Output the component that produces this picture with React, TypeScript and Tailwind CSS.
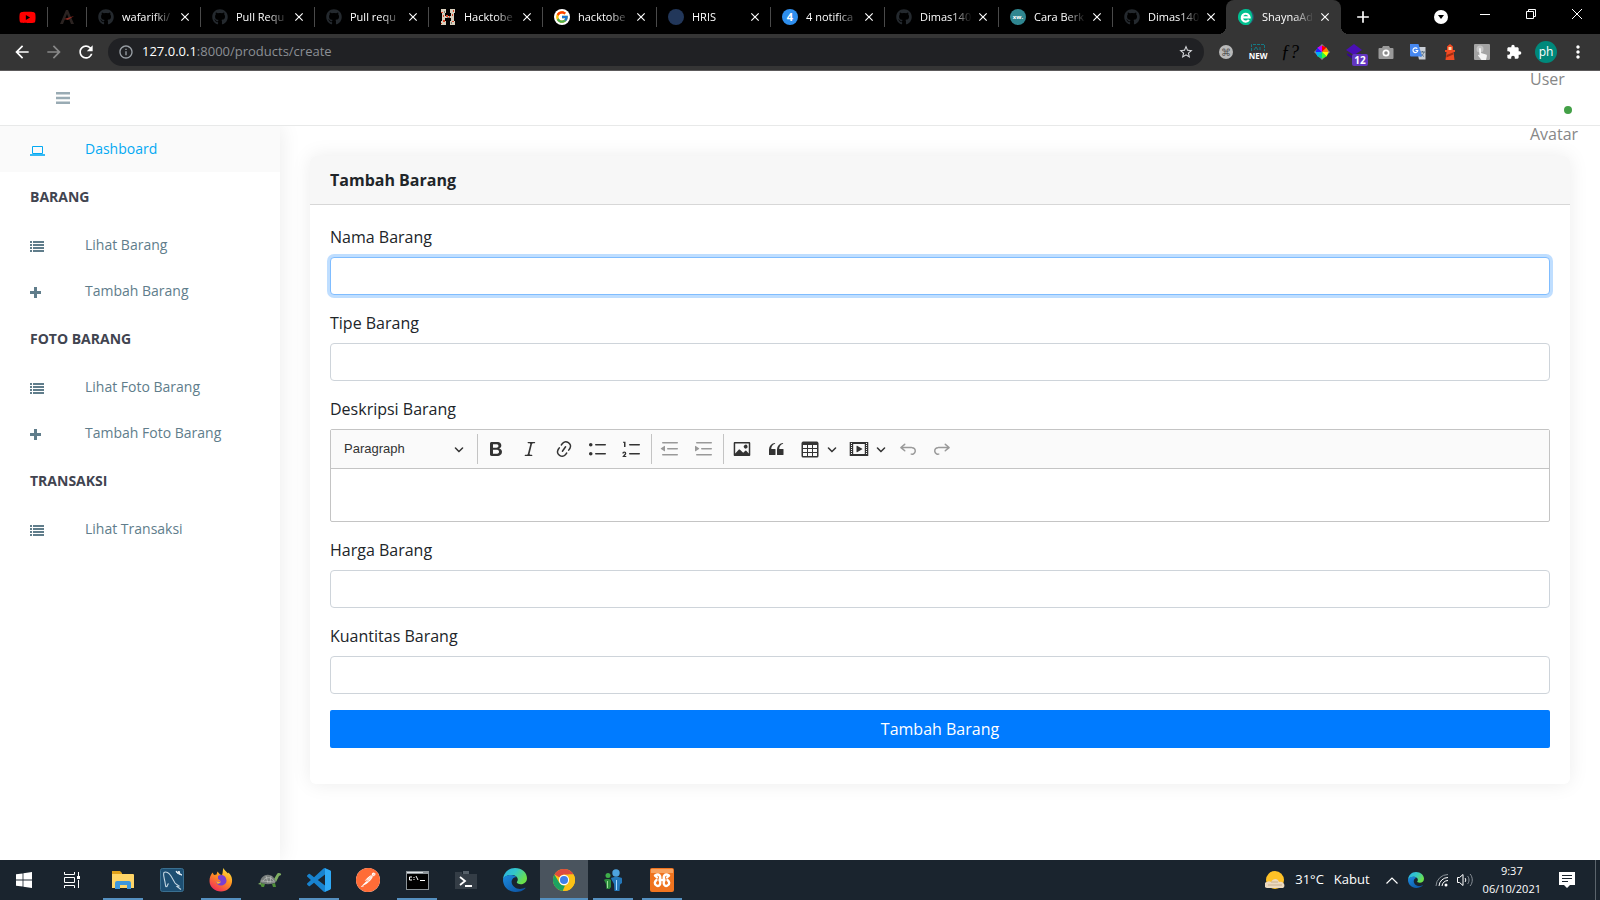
import type { ReactNode } from "react";
import { FaGithub, FaYoutube } from "react-icons/fa";
import { FcGoogle } from "react-icons/fc";
import {
  MdAdd,
  MdArrowBack,
  MdArrowForward,
  MdClose,
  MdExtension,
  MdInfoOutline,
  MdMoreVert,
  MdRefresh,
  MdStarBorder,
} from "react-icons/md";
import { SiPostman } from "react-icons/si";

/* ---------- Browser tabs ---------- */

const github = <FaGithub className="size-4 text-[#24292e]" />;

const HacktoberIcon = () => (
  <svg viewBox="0 0 16 16" className="size-4">
    <path d="M1 0h5v4H5v3h6V4h-1V0h5v4h-1v8h1v4h-5v-4h1V9H5v3h1v4H1v-4h1V4H1z" fill="#d8cfbd" />
    <path d="M1 3h2v1H1zM6 6h2v2H6zM9 7h1v2H9zM13 1h1v2h-1zM3 11h2v2H3zM12 12h2v1h-2zM3 6h1v2H3zM12 5h1v2h-1zM1 14h1v1H1z" fill="#d9482b" />
    <path d="M4 2h1v2H4zM11 13h1v2h-1zM7 8h2v1H7z" fill="#7d8378" />
  </svg>
);

const ShaynaIcon = () => (
  <svg viewBox="0 0 16 16" className="size-4 shrink-0">
    <circle cx="8" cy="8" r="8" fill="#2f4f6a" />
    <path d="M11 .600A8 8 0 1 0 11 15.400 9.500 9.500 0 0 0 11 .600z" fill="#00c08f" />
    <path d="M4.200 8.400h7.400A3.900 3.900 0 1 0 10.900 10.900" fill="none" stroke="#fff" strokeWidth="2.200" />
  </svg>
);

type Tab = { title: string; icon: ReactNode };

const tabs: Tab[] = [
  { title: "wafarifki/", icon: github },
  { title: "Pull Requ", icon: github },
  { title: "Pull requ", icon: github },
  { title: "Hacktobe", icon: <HacktoberIcon /> },
  {
    title: "hacktobe",
    icon: (
      <span className="flex size-4 items-center justify-center rounded-full bg-white">
        <FcGoogle className="size-3.5" />
      </span>
    ),
  },
  { title: "HRIS", icon: <span className="size-4 rounded-full bg-[#22375a]" /> },
  {
    title: "4 notifica",
    icon: (
      <span className="flex size-4 items-center justify-center rounded-full bg-[#2e8eed] text-[11px] font-bold text-white">
        4
      </span>
    ),
  },
  { title: "Dimas140", icon: github },
  {
    title: "Cara Berk",
    icon: (
      <span className="flex size-4 items-center justify-center rounded-full bg-[#2f8690] text-[6px] font-bold text-white">
        xw.
      </span>
    ),
  },
  { title: "Dimas140", icon: github },
];

const tabTitle =
  "w-[52px] overflow-hidden whitespace-nowrap text-[11px] text-white [mask-image:linear-gradient(to_right,#000_60%,transparent)]";

function TabStrip() {
  return (
    <div className="flex h-[34px] items-center bg-black pl-3">
      <button aria-label="YouTube" className="flex w-[35px] justify-center pr-1">
        <FaYoutube className="size-[17px] text-[#f00]" />
      </button>
      <button aria-label="Pinned tab" className="flex h-5 w-[39px] items-center justify-center border-l border-[#4a4a4a]">
        <svg viewBox="0 0 16 16" className="size-4">
          <path d="M1 15 7 1h2l6 14h-3L8 5 4 15z" fill="#2b2321" />
          <path d="m5 10 10-3-6 4z" fill="#8d2b22" />
        </svg>
      </button>
      {tabs.map((tab, i) => (
        <div key={i} className="flex h-5 w-[114px] items-center border-l border-[#4a4a4a] pl-[11px]">
          <span className="flex shrink-0">{tab.icon}</span>
          <span className={`ml-2 ${tabTitle}`}>{tab.title}</span>
          <button aria-label="Close tab" className="ml-1">
            <MdClose className="size-3.5 text-white" />
          </button>
        </div>
      ))}
      <div className="relative flex h-full w-[115px] items-center rounded-t-lg bg-[#353535] pl-3">
        <span className="absolute bottom-0 -left-2 size-2 bg-[radial-gradient(circle_at_0_0,transparent_8px,#353535_8px)]" />
        <span className="absolute -right-2 bottom-0 size-2 bg-[radial-gradient(circle_at_100%_0,transparent_8px,#353535_8px)]" />
        <ShaynaIcon />
        <span className={`ml-2 ${tabTitle}`}>ShaynaAd</span>
        <button aria-label="Close tab" className="ml-1">
          <MdClose className="size-3.5 text-white" />
        </button>
      </div>
      <button aria-label="New tab" className="ml-3">
        <MdAdd className="size-5 text-white" />
      </button>
      <div className="ml-auto flex h-full items-center text-white">
        <button aria-label="Search tabs" className="flex size-3.5 items-center justify-center rounded-full bg-white">
          <svg viewBox="0 0 8 6" className="h-1.5 w-2">
            <path d="M1 1h6L4 5z" fill="#000" />
          </svg>
        </button>
        <div className="ml-3.5 flex pb-1.5">
          <button aria-label="Minimize" className="flex w-[46px] justify-center">
            <svg viewBox="0 0 12 12" className="size-3" stroke="#fff" fill="none">
              <path d="M1 6.500h10" />
            </svg>
          </button>
          <button aria-label="Restore" className="flex w-[46px] justify-center">
            <svg viewBox="0 0 12 12" className="size-3" stroke="#fff" fill="none">
              <path d="M1.500 3.500h7v7h-7zM3.500 3.500v-2h7v7h-2" />
            </svg>
          </button>
          <button aria-label="Close" className="flex w-[46px] justify-center">
            <svg viewBox="0 0 12 12" className="size-3" stroke="#fff" fill="none">
              <path d="m1 1 10 10M11 1 1 11" />
            </svg>
          </button>
        </div>
      </div>
    </div>
  );
}

/* ---------- Browser toolbar ---------- */

const wheel = ["#f00", "#ff8a00", "#ff0", "#3f3", "#0c9", "#0af", "#22f", "#c0f"];

const extensions: { name: string; icon: ReactNode }[] = [
  {
    name: "Shortcuts",
    icon: (
      <span className="flex size-3.5 items-center justify-center rounded-full bg-[#b9b9b9] text-[10px] text-[#555]">⌘</span>
    ),
  },
  {
    name: "Screenshot",
    icon: (
      <span className="flex h-4 w-4 flex-col items-center">
        <svg viewBox="0 0 14 7" className="h-[7px] w-3.5" fill="none" stroke="#147a86">
          <path d="M.5 7V.5h13V7" strokeDasharray="3 1" />
          <path d="m3 6 2-3 2 3M9 3v3" />
        </svg>
        <span className="text-[8px] leading-[9px] font-bold text-white">NEW</span>
      </span>
    ),
  },
  {
    name: "What font",
    icon: <span className="font-['Liberation_Serif',serif] text-lg leading-4 text-black italic">ƒ?</span>,
  },
  {
    name: "Colour picker",
    icon: (
      <svg viewBox="-8 -8 16 16" className="size-4">
        <path d="M0-8 8 0 0 8-8 0z" fill="#8a8a8a" />
        {wheel.map((c, i) => (
          <path key={c} d="M0 0 0-6.500 4.600-4.600z" fill={c} transform={`rotate(${i * 45})`} />
        ))}
      </svg>
    ),
  },
  {
    name: "Stack",
    icon: (
      <span className="relative flex size-4">
        <svg viewBox="0 0 16 16" className="size-4">
          <path d="M8 0 16 6 8 11 0 6z" fill="#4a0fb5" />
          <path d="m1 9 7 4 7-4v2l-7 5-7-5z" fill="#35098a" />
        </svg>
        <span className="absolute top-2.5 left-1.5 flex h-3 w-4 items-center justify-center rounded-xs bg-[#6236c0] text-[10px] font-bold text-white">
          12
        </span>
      </span>
    ),
  },
  {
    name: "Camera",
    icon: (
      <svg viewBox="0 0 16 16" className="size-4">
        <path d="M5 2h6l1 2h2.500a1 1 0 0 1 1 1v9a1 1 0 0 1-1 1h-13a1 1 0 0 1-1-1V5a1 1 0 0 1 1-1H4z" fill="#9a9a9a" />
        <circle cx="8" cy="9" r="3.500" fill="#fff" />
        <circle cx="8" cy="9" r="1.800" fill="#888" />
      </svg>
    ),
  },
  {
    name: "Translate",
    icon: (
      <svg viewBox="0 0 16 16" className="size-4">
        <path d="M6 3h9.500v12.500H9z" fill="#c9ced6" />
        <path d="M10 8h5M12.500 7v1M14 8c-.5 2-2 3.500-3.500 4.500M11 9.500c1 1.500 2 2.500 3 3" stroke="#5a7285" fill="none" />
        <path d="M0 0h8.500L12 12.500H1a1 1 0 0 1-1-1z" fill="#4688f1" />
        <path d="M7.300 4.700A2.400 2.400 0 1 0 7.800 6.500H5.500" stroke="#fff" strokeWidth="1.200" fill="none" />
      </svg>
    ),
  },
  {
    name: "Lighthouse",
    icon: (
      <svg viewBox="0 0 16 16" className="size-4">
        <path d="m8 0 3 2.500V6h2v2h-1.500l1 8h-9l1-8H3V6h2V2.500z" fill="#f04b23" />
        <path d="M6.500 3h3v3h-3z" fill="#ffd9a8" />
        <path d="m4.500 11 6.500-2.500.3 2-7 3z" fill="#a12c12" />
      </svg>
    ),
  },
  {
    name: "Touch",
    icon: (
      <svg viewBox="0 0 16 16" className="size-4">
        <rect width="16" height="16" rx="1" fill="#a3a3a3" />
        <circle cx="6" cy="5" r="3.500" fill="#c4c4c4" />
        <path d="M5 5a1 1 0 0 1 2 0v4l5 1.500c1 .3 1 1 .8 2L12 16H7.500L4 11.500c0-1 1-1 1.500 0z" fill="#f4f4f4" />
      </svg>
    ),
  },
  { name: "Extensions", icon: <MdExtension className="size-4 text-white" /> },
];

function Toolbar() {
  return (
    <div className="flex h-[37px] items-center border-b border-[#5c5a5b] bg-[#353535] pr-1.5 pl-3">
      <div className="flex items-center gap-3">
        <button aria-label="Back">
          <MdArrowBack className="size-5 text-white" />
        </button>
        <button aria-label="Forward">
          <MdArrowForward className="size-5 text-[#888]" />
        </button>
        <button aria-label="Reload">
          <MdRefresh className="size-5 text-white" />
        </button>
      </div>
      <div className="ml-3 flex h-7 flex-1 items-center rounded-full bg-[#202124] px-2.5">
        <MdInfoOutline className="size-4 text-[#9aa0a6]" />
        <p className="ml-2 flex-1 text-[13px] text-[#8b8f94]">
          <span className="text-white">127.0.0.1</span>:8000/products/create
        </p>
        <button aria-label="Bookmark">
          <MdStarBorder className="size-4 text-[#d5d7da]" />
        </button>
      </div>
      <div className="ml-1.5 flex">
        {extensions.map((e) => (
          <button key={e.name} aria-label={e.name} className="flex w-8 items-center justify-center">
            {e.icon}
          </button>
        ))}
        <button aria-label="Profile" className="flex w-8 items-center justify-center">
          <span className="flex size-[22px] items-center justify-center rounded-full bg-[#00897b] pb-px text-xs text-white">ph</span>
        </button>
        <button aria-label="Menu" className="flex w-8 items-center justify-center">
          <MdMoreVert className="size-5 text-white" />
        </button>
      </div>
    </div>
  );
}

/* ---------- Admin sidebar ---------- */

const LaptopIcon = () => (
  <svg viewBox="0 0 15 11" className="h-[11px] w-[15px]" fill="none" stroke="currentColor">
    <path d="M2.500 8.500v-7h10v7z" />
    <path d="M0 10h15" strokeWidth="1.600" />
  </svg>
);

const ListIcon = () => (
  <svg viewBox="0 0 14 11" className="h-[11px] w-3.5" fill="currentColor">
    <path d="M0 0h2v2H0zM3 0h11v2H3zM0 3h2v2H0zM3 3h11v2H3zM0 6h2v2H0zM3 6h11v2H3zM0 9h2v2H0zM3 9h11v2H3z" />
  </svg>
);

const PlusIcon = () => (
  <svg viewBox="0 0 11 11" className="size-[11px]" fill="currentColor">
    <path d="M4 0h3v4h4v3H7v4H4V7H0V4h4z" />
  </svg>
);

function NavLink({ icon, label, active }: { icon: ReactNode; label: string; active?: boolean }) {
  return (
    <a
      href="#"
      className={`flex h-[46px] items-center pl-[30px] text-sm ${active ? "bg-[#fafafa] text-[#03a9f3]" : "text-[#607d8b]"}`}
    >
      <span className="flex w-[55px] pt-0.5">{icon}</span>
      {label}
    </a>
  );
}

const NavTitle = ({ children }: { children: string }) => (
  <h3 className="flex h-[50px] items-center pl-[30px] text-sm font-bold text-[#414450]">{children}</h3>
);

function Sidebar() {
  return (
    <aside className="w-[280px] shrink-0 bg-white shadow-[1px_0_20px_rgba(0,0,0,0.08)]">
      <nav>
        <NavLink icon={<LaptopIcon />} label="Dashboard" active />
        <NavTitle>BARANG</NavTitle>
        <NavLink icon={<ListIcon />} label="Lihat Barang" />
        <NavLink icon={<PlusIcon />} label="Tambah Barang" />
        <NavTitle>FOTO BARANG</NavTitle>
        <NavLink icon={<ListIcon />} label="Lihat Foto Barang" />
        <NavLink icon={<PlusIcon />} label="Tambah Foto Barang" />
        <NavTitle>TRANSAKSI</NavTitle>
        <NavLink icon={<ListIcon />} label="Lihat Transaksi" />
      </nav>
    </aside>
  );
}

/* ---------- Rich text editor ---------- */

const paths = {
  bold: "M10.187 17H5.773c-.637 0-1.092-.138-1.364-.415-.273-.277-.409-.718-.409-1.323V4.738c0-.617.14-1.062.419-1.332.279-.27.73-.406 1.354-.406h4.68c.69 0 1.288.041 1.793.124.506.083.96.242 1.36.478.341.197.644.447.906.75a3.262 3.262 0 0 1 .808 2.162c0 1.401-.722 2.426-2.167 3.075C15.05 10.175 16 11.315 16 13.01a3.756 3.756 0 0 1-2.296 3.504 6.1 6.1 0 0 1-1.517.377c-.571.073-1.238.11-2 .11zm-.217-6.217H7v4.087h3.069c1.977 0 2.965-.69 2.965-2.072 0-.707-.256-1.22-.768-1.537-.512-.319-1.277-.478-2.296-.478zM7 5.13v3.619h2.606c.729 0 1.292-.067 1.69-.2a1.6 1.6 0 0 0 .91-.765c.165-.267.247-.566.247-.897 0-.707-.26-1.176-.778-1.409-.519-.232-1.31-.348-2.375-.348H7z",
  italic:
    "m9.586 14.633.021.004c-.036.335.095.655.393.962.082.083.173.15.274.201h1.474a.6.6 0 1 1 0 1.2H5.304a.6.6 0 0 1 0-1.2h1.15c.474-.07.809-.182 1.005-.334.157-.122.291-.32.404-.597l2.416-9.55a1.053 1.053 0 0 0-.281-.823 1.12 1.12 0 0 0-.442-.296H8.15a.6.6 0 0 1 0-1.2h6.443a.6.6 0 1 1 0 1.2h-1.195c-.376.056-.65.155-.823.296-.215.175-.423.439-.623.79l-2.366 9.347z",
  link: "m11.077 15 .991-1.416a.75.75 0 1 1 1.229.86l-1.148 1.64a.748.748 0 0 1-.217.206 5.251 5.251 0 0 1-8.503-5.955.741.741 0 0 1 .12-.274l1.147-1.639a.75.75 0 1 1 1.228.86L4.933 10.7l.006.003a3.75 3.75 0 0 0 6.132 4.294l.006.004zm5.494-5.335a.748.748 0 0 1-.12.274l-1.147 1.639a.75.75 0 1 1-1.228-.86l.86-1.23a3.75 3.75 0 0 0-6.144-4.301l-.86 1.229a.75.75 0 0 1-1.229-.86l1.148-1.64a.748.748 0 0 1 .217-.206 5.251 5.251 0 0 1 8.503 5.955zm-4.563-2.532a.75.75 0 0 1 .184 1.045l-3.155 4.505a.75.75 0 1 1-1.229-.86l3.155-4.506a.75.75 0 0 1 1.045-.184z",
  bulleted:
    "M7 5.75c0 .414.336.75.75.75h9.5a.75.75 0 1 0 0-1.5h-9.5a.75.75 0 0 0-.75.75zm-6 0C1 4.784 1.777 4 2.75 4c.966 0 1.75.777 1.75 1.75 0 .966-.777 1.75-1.75 1.75C1.784 7.5 1 6.723 1 5.75zm6 9c0 .414.336.75.75.75h9.5a.75.75 0 1 0 0-1.5h-9.5a.75.75 0 0 0-.75.75zm-6 0c0-.966.777-1.75 1.75-1.75.966 0 1.75.777 1.75 1.75 0 .966-.777 1.75-1.75 1.75-.966 0-1.75-.777-1.75-1.75z",
  numbered:
    "M7 5.75c0 .414.336.75.75.75h9.5a.75.75 0 1 0 0-1.5h-9.5a.75.75 0 0 0-.75.75zM3.5 3v5H2V3.7H1v-1h2.5V3zM.343 17.857l2.59-3.257H2.92a.6.6 0 1 0-1.04 0H.302a2 2 0 1 1 3.995 0h-.001c-.048.405-.16.734-.333.988-.175.254-.59.692-1.244 1.312H4.3v1h-4l.043-.043zM7 14.75a.75.75 0 0 1 .75-.75h9.5a.75.75 0 1 1 0 1.5h-9.5a.75.75 0 0 1-.75-.75z",
  outdent:
    "M2 3.75c0 .414.336.75.75.75h14.5a.75.75 0 1 0 0-1.5H2.75a.75.75 0 0 0-.75.75zm5 6c0 .414.336.75.75.75h9.5a.75.75 0 1 0 0-1.5h-9.5a.75.75 0 0 0-.75.75zM2.75 16.5h14.5a.75.75 0 1 0 0-1.5H2.75a.75.75 0 1 0 0 1.5zM5 7.275v4.617a.4.4 0 0 1-.618.334L.992 10.02a.4.4 0 0 1-.013-.661l3.39-2.408A.4.4 0 0 1 5 7.275z",
  indent:
    "M2 3.75c0 .414.336.75.75.75h14.5a.75.75 0 1 0 0-1.5H2.75a.75.75 0 0 0-.75.75zm5 6c0 .414.336.75.75.75h9.5a.75.75 0 1 0 0-1.5h-9.5a.75.75 0 0 0-.75.75zM2.75 16.5h14.5a.75.75 0 1 0 0-1.5H2.75a.75.75 0 1 0 0 1.5zM1.632 6.95 5.02 9.358a.4.4 0 0 1-.013.661l-3.39 2.207A.4.4 0 0 1 1 11.892V7.275a.4.4 0 0 1 .632-.326z",
  image:
    "M6.91 10.54c.26-.23.64-.21.88.03l3.36 3.14 2.23-2.06a.64.64 0 0 1 .87 0l2.52 2.97V4.5H3.2v10.12l3.71-4.08zm10.27-7.51c.6 0 1.09.47 1.09 1.05v11.84c0 .59-.49 1.06-1.09 1.06H2.79c-.6 0-1.09-.47-1.09-1.06V4.08c0-.58.49-1.05 1.1-1.05h14.38zm-5.22 5.56a1.96 1.96 0 1 1 3.4-1.96 1.96 1.96 0 0 1-3.4 1.96z",
  quote:
    "M3 10.423a6.5 6.5 0 0 1 6.056-6.408l.038.67C6.448 5.423 5.354 7.663 5.22 10H9c.552 0 .5.432.5.986v4.511c0 .554-.448.503-1 .503h-5c-.552 0-.5-.449-.5-1.003v-4.574zm8 0a6.5 6.5 0 0 1 6.056-6.408l.038.67c-2.646.739-3.74 2.979-3.873 5.315H17c.552 0 .5.432.5.986v4.511c0 .554-.448.503-1 .503h-5c-.552 0-.5-.449-.5-1.003v-4.574z",
  table:
    "M3 6v3h4V6H3zm0 4v3h4v-3H3zm0 4v3h4v-3H3zm5 3h4v-3H8v3zm5 0h4v-3h-4v3zm4-4v-3h-4v3h4zm0-4V6h-4v3h4zm1.5 8a1.5 1.5 0 0 1-1.5 1.5H3A1.5 1.5 0 0 1 1.5 17V4c.222-.863 1.068-1.5 2-1.5h13c.932 0 1.778.637 2 1.5v13zM12 13v-3H8v3h4zm0-4V6H8v3h4z",
  media:
    "M18.68 3.03c.6 0 .59-.03.59.55v12.84c0 .59.01.56-.59.56H1.29c-.6 0-.59.03-.59-.56V3.58c0-.58-.01-.55.6-.55h17.38zM15.77 15V5H4.2v10h11.57zM2 4v1h1V4H2zm0 2v1h1V6H2zm0 2v1h1V8H2zm0 2v1h1v-1H2zm0 2v1h1v-1H2zm0 2v1h1v-1H2zM17 4v1h1V4h-1zm0 2v1h1V6h-1zm0 2v1h1V8h-1zm0 2v1h1v-1h-1zm0 2v1h1v-1h-1zm0 2v1h1v-1h-1zM7.5 7.177a.4.4 0 0 1 .593-.351l5.133 2.824a.4.4 0 0 1 0 .7l-5.133 2.824a.4.4 0 0 1-.593-.35V7.176v.001z",
  undo: "m5.042 9.367 2.189 1.837a.75.75 0 0 1-.965 1.149l-3.788-3.18a.747.747 0 0 1-.21-.284.75.75 0 0 1 .17-.945L6.23 4.762a.75.75 0 1 1 .964 1.15L4.863 7.866h8.917A.75.75 0 0 1 14 7.9a4 4 0 1 1-1.477 7.718l.344-1.489a2.5 2.5 0 1 0 1.094-4.73l.008-.032H5.042z",
  redo: "m14.958 9.367-2.189 1.837a.75.75 0 0 0 .965 1.149l3.788-3.18a.747.747 0 0 0 .21-.284.75.75 0 0 0-.17-.945L13.77 4.762a.75.75 0 1 0-.964 1.15l2.331 1.955H6.22A.75.75 0 0 0 6 7.9a4 4 0 1 0 1.477 7.718l-.344-1.489A2.5 2.5 0 1 1 6.039 9.4l-.008-.032h8.927z",
};

function Arrow({ className = "" }: { className?: string }) {
  return (
    <svg viewBox="0 0 10 10" className={`size-2.5 shrink-0 ${className}`} fill="currentColor">
      <path d="M.941 4.523a.75.75 0 1 1 1.06-1.06l3.006 3.005 3.005-3.005a.75.75 0 1 1 1.06 1.06l-3.549 3.55a.75.75 0 0 1-1.168-.136L.941 4.523z" />
    </svg>
  );
}

function Tool({ icon, label, menu, disabled }: { icon: keyof typeof paths; label: string; menu?: boolean; disabled?: boolean }) {
  return (
    <button
      type="button"
      aria-label={label}
      disabled={disabled}
      className={`flex h-[30px] items-center gap-[7px] pl-[5px] text-[#333] disabled:text-[#999] ${menu ? "w-[46px]" : "w-[31px]"}`}
    >
      <svg viewBox="0 0 20 20" className="size-5 shrink-0" fill="currentColor">
        <path d={paths[icon]} />
      </svg>
      {menu && <Arrow />}
    </button>
  );
}

const Divider = () => <span className="h-[30px] w-px bg-[#c4c4c4]" />;

function Editor() {
  return (
    <div className="rounded-xs border border-[#c4c4c4] bg-white">
      <div className="flex h-[39px] items-center gap-[3px] border-b border-[#c4c4c4] bg-[#fafafa] pl-[5px]">
        <div className="grid w-[138px] items-center">
          <select
            aria-label="Heading"
            className="col-start-1 row-start-1 h-[30px] appearance-none bg-transparent pl-2 font-['Liberation_Sans',Arial,sans-serif] text-[13px] text-[#333]"
          >
            <option>Paragraph</option>
          </select>
          <Arrow className="pointer-events-none col-start-1 row-start-1 mr-2.5 justify-self-end text-[#333]" />
        </div>
        <Divider />
        <Tool icon="bold" label="Bold" />
        <Tool icon="italic" label="Italic" />
        <Tool icon="link" label="Link" />
        <Tool icon="bulleted" label="Bulleted List" />
        <Tool icon="numbered" label="Numbered List" />
        <Divider />
        <Tool icon="outdent" label="Decrease indent" disabled />
        <Tool icon="indent" label="Increase indent" disabled />
        <Divider />
        <Tool icon="image" label="Insert image" />
        <Tool icon="quote" label="Block quote" />
        <Tool icon="table" label="Insert table" menu />
        <Tool icon="media" label="Insert media" menu />
        <Tool icon="undo" label="Undo" disabled />
        <Tool icon="redo" label="Redo" disabled />
      </div>
      <textarea id="description" className="block h-[52px] w-full resize-none px-2.5 outline-none" />
    </div>
  );
}

/* ---------- Form ---------- */

function Field({ id, label, focused }: { id: string; label: string; focused?: boolean }) {
  return (
    <div className="mb-4">
      <label htmlFor={id} className="mb-2 block text-base">
        {label}
      </label>
      <input
        id={id}
        name={id}
        type="text"
        className={`block h-[38px] w-full rounded border bg-white px-3 outline-none ${
          focused ? "border-[#80bdff] shadow-[0_0_0_3px_rgba(0,123,255,0.25)]" : "border-[#ced4da]"
        }`}
      />
    </div>
  );
}

function ProductForm() {
  return (
    <section className="rounded-md bg-white shadow-[0_0_20px_rgba(0,0,0,0.08)]">
      <h1 className="rounded-t-md border-b border-[#d7d7d7] bg-[#f7f7f7] px-5 py-3 text-base font-bold">Tambah Barang</h1>
      <form className="p-5">
        <Field id="name" label="Nama Barang" focused />
        <Field id="type" label="Tipe Barang" />
        <div className="mb-4">
          <label htmlFor="description" className="mb-2 block text-base">
            Deskripsi Barang
          </label>
          <Editor />
        </div>
        <Field id="price" label="Harga Barang" />
        <Field id="quantity" label="Kuantitas Barang" />
        <button type="button" className="mb-4 block h-[38px] w-full rounded-xs bg-[#007bff] text-base text-white">
          Tambah Barang
        </button>
      </form>
    </section>
  );
}

function AdminPage() {
  return (
    <div className="flex flex-1 flex-col bg-white text-[#212529]">
      <header className="relative z-10 flex h-[55px] items-center border-b border-[#e8e9e9] bg-white pl-14">
        <button aria-label="Toggle menu">
          <svg viewBox="0 0 14 12" className="h-3 w-3.5" fill="#99abb4">
            <path d="M0 0h14v2.500H0zM0 4.800h14v2.400H0zM0 9.500h14V12H0z" />
          </svg>
        </button>
        <a href="#" className="absolute -top-[19px] right-[22px] w-12 text-base leading-[55px] text-[#878787]">
          User Avatar
          <span className="absolute top-[54px] left-[34px] size-2 rounded-full bg-[#43a047]" />
        </a>
      </header>
      <div className="flex flex-1">
        <Sidebar />
        <main className="min-w-0 flex-1 p-[30px]">
          <ProductForm />
        </main>
      </div>
    </div>
  );
}

/* ---------- Taskbar ---------- */

const EdgeIcon = ({ className }: { className: string }) => (
  <svg viewBox="0 0 24 24" className={className}>
    <defs>
      <linearGradient id="edge-top" x1="0" y1="0" x2="1" y2=".5">
        <stop offset="0" stopColor="#2ab0e6" />
        <stop offset=".5" stopColor="#33c6c9" />
        <stop offset="1" stopColor="#6be04a" />
      </linearGradient>
      <linearGradient id="edge-low" x1="0" y1="0" x2="1" y2="1">
        <stop offset="0" stopColor="#1b8be0" />
        <stop offset="1" stopColor="#0c4f9c" />
      </linearGradient>
    </defs>
    <path d="M0 11.500C.5 5 5.500 0 12 0c7 0 12 4.800 12 10.200 0 3.600-2.800 6-6.200 6-2.700 0-4.200-1-4-1.800.2-.6 1-1 1-2.800 0-2.600-2.800-4.600-6-4.600C4.500 7 1 9 0 11.500z" fill="url(#edge-top)" />
    <path d="M0 12C0 9 3.600 7 8 7c2.500 0 4.500 1 5.500 2.200-2.800-.5-4.900 2-4.900 4.600 0 4 4 7.200 8.400 7.200 2 0 3.700-.6 4.800-1.200.5-.2.800.2.500.6C20 22.700 16.200 24 12.500 24 5.500 24 0 18.500 0 12z" fill="url(#edge-low)" />
  </svg>
);

const ChromeIcon = () => (
  <svg viewBox="0 0 24 24" className="size-[22px]">
    <circle cx="12" cy="12" r="12" fill="#fbc116" />
    <path d="M12 0a12 12 0 0 1 10.400 6H12a6 6 0 0 0-5.200 3L1.600 6A12 12 0 0 1 12 0z" fill="#dd4b3e" />
    <path d="M1.600 6 6.800 15a6 6 0 0 0 5.200 3l1 .2L10.500 24A12 12 0 0 1 1.600 6z" fill="#1da261" />
    <path d="m12 24 5.200-9 .8-3-1-6h5.400A12 12 0 0 1 12 24z" fill="#fbc116" />
    <circle cx="12" cy="12" r="5.600" fill="#fff" />
    <circle cx="12" cy="12" r="4.400" fill="#3f7fe8" />
  </svg>
);

type TaskItem = { name: string; icon: ReactNode; running?: boolean; active?: boolean };

const systemItems: TaskItem[] = [
  {
    name: "Start",
    icon: (
      <svg viewBox="0 0 16 16" className="size-4" fill="#fff">
        <path d="M0 2.300 6.600 1.400V7.600H0zM7.400 1.300 16 0v7.600H7.400zM0 8.400h6.600v6.200L0 13.700zM7.400 8.400H16V16l-8.600-1.300z" />
      </svg>
    ),
  },
  {
    name: "Task View",
    icon: (
      <svg viewBox="0 0 16 16" className="size-4" fill="none" stroke="#fff">
        <path d="M.5 0v2.500h10V0M.5 5.500h10v5H.5zM.5 16v-2.500h10V16M14.500 0v4M14.500 8v8" />
        <path d="M13 4h3v3h-3z" fill="#fff" stroke="none" />
      </svg>
    ),
  },
];

const appItems: TaskItem[] = [
  {
    name: "File Explorer",
    running: true,
    icon: (
      <svg viewBox="0 0 22 18" className="h-[18px] w-[22px]">
        <path d="M0 0h8l2 2v3H0z" fill="#e0a11b" />
        <path d="M0 3h21a1 1 0 0 1 1 1v13H0z" fill="#ffd567" />
        <path d="M3 18v-6a2 2 0 0 1 2-2h12a2 2 0 0 1 2 2v6h-4v-4H8v4z" fill="#3d97dd" />
      </svg>
    ),
  },
  {
    name: "MySQL Workbench",
    icon: (
      <svg viewBox="0 0 24 24" className="size-6">
        <rect x=".5" y=".5" width="23" height="23" rx="2" fill="#1d4f73" stroke="#3a6f90" />
        <path
          d="M6 19c-1-2-.5-4-1.500-7C4 9 3 6 4 4.500 6 3 9 5 11 8l4 7c1 1.500 3 2 4 3l-2 .5 4 3M6.500 19c1-1 1-2.500 2-3.500"
          fill="none"
          stroke="#c3d6e2"
          strokeWidth="1.100"
        />
        <path d="m16 3 2 1.500L19 3l1 3 2 1-2-.5L17 5z" fill="#e6eef4" stroke="#e6eef4" />
      </svg>
    ),
  },
  {
    name: "Firefox",
    running: true,
    icon: (
      <svg viewBox="0 0 24 24" className="size-6">
        <defs>
          <linearGradient id="fox" x1=".8" y1="0" x2=".2" y2="1">
            <stop offset="0" stopColor="#ffe63f" />
            <stop offset=".45" stopColor="#ff9021" />
            <stop offset="1" stopColor="#f0245e" />
          </linearGradient>
        </defs>
        <path
          d="M3.500 4.500 5 7l2.500-.500L8.500 3.500l2.500 3 2 .500c1-2.500.500-4.500 1.500-7 1 2.500 3 3.500 4.500 5.500l.500-1c3 3 4 6 3.500 9.500C22.300 19.500 18 23.500 12 23.500S.500 19 .500 13c0-3.500 1-6 3-8.500z"
          fill="url(#fox)"
        />
        <path d="M9 8c3-2 8-1 8.500 4.500 0 3.500-3 5-5.500 5-3 0-5-2-5-4l2 .500 2.500-1.500-2.500-1.500z" fill="#7a3fd0" />
        <path d="M7 13c1.500 1.500 3 .500 5 .500-.500 1.500-2 2.500-4 2z" fill="#ffb02e" />
      </svg>
    ),
  },
  {
    name: "TortoiseGit",
    icon: (
      <svg viewBox="0 0 24 16" className="h-4 w-6">
        <path d="M3 10 0 12l4 1zM16 7l3-5c1-2 5-1 4 1l-2 1-3 6z" fill="#7fae62" />
        <path d="M4 11c-1 2-2 3 0 4h2l1-3zM14 12l1 3h3l-1-4z" fill="#4f9138" />
        <path d="M2 10c1-5 5-8 9-7 4 0 6 4 7 7-4 3-12 3-16 0z" fill="#777d7b" />
        <path d="M5 9c2-4 8-5 11 0M8 4l2 7M13 4l-1 7M3 9l14 1" stroke="#c9cdca" fill="none" strokeWidth=".6" />
      </svg>
    ),
  },
  {
    name: "Visual Studio Code",
    running: true,
    icon: (
      <svg viewBox="0 0 24 24" className="size-6">
        <path
          d="M23.150 2.587 18.210.21a1.494 1.494 0 0 0-1.705.29l-9.460 8.630-4.120-3.128a.999.999 0 0 0-1.276.057L.327 7.261A1 1 0 0 0 .326 8.740L3.899 12 .326 15.260a1 1 0 0 0 .001 1.479L1.650 17.940a.999.999 0 0 0 1.276.057l4.120-3.128 9.460 8.630a1.492 1.492 0 0 0 1.704.29l4.942-2.377A1.500 1.500 0 0 0 24 20.060V3.939a1.500 1.500 0 0 0-.850-1.352zm-5.146 14.861L10.826 12l7.178-5.448v10.896z"
          fill="#1883cf"
        />
        <path d="M18 .2 23.200 2.600a1.500 1.500 0 0 1 .8 1.300v16.200a1.500 1.500 0 0 1-.8 1.300L18 23.800z" fill="#2fa9f5" />
      </svg>
    ),
  },
  {
    name: "Postman",
    icon: (
      <span className="flex size-6 items-center justify-center rounded-full bg-white">
        <SiPostman className="size-6 text-[#ff6c37]" />
      </span>
    ),
  },
  {
    name: "Command Prompt",
    running: true,
    icon: (
      <svg viewBox="0 0 23 19" className="h-[19px] w-[23px]">
        <path d="M0 0h23v19H0z" fill="#8d9499" />
        <path d="M1 3h21v15H1z" fill="#000" />
        <path d="M1 1h16v1H1z" fill="#dfe4e8" />
        <path d="M6 6H3.500v3H6M8 6v1M8 8v1M10 5l2 4M14 9.500h5" stroke="#fff" fill="none" />
      </svg>
    ),
  },
  {
    name: "Terminal",
    icon: (
      <svg viewBox="0 0 22 18" className="h-[18px] w-[22px]">
        <path d="M8 0h6v3H8z" fill="#566069" />
        <path d="M0 1h7v2h15v15H0z" fill="#343d46" />
        <path d="m5 6 5 4-5 4M10 15h7" fill="none" stroke="#fff" strokeWidth="1.800" />
      </svg>
    ),
  },
  { name: "Microsoft Edge", icon: <EdgeIcon className="size-6" /> },
  { name: "Google Chrome", active: true, running: true, icon: <ChromeIcon /> },
  {
    name: "Messenger",
    running: true,
    icon: (
      <svg viewBox="0 0 18 22" className="h-[22px] w-[18px]">
        <circle cx="4" cy="6.500" r="2.500" fill="#3fae4a" />
        <path d="M0 11c0-1.500 7-1.500 7 0v7l-1.500 2h-3L2 15z" fill="#2d8f3c" />
        <path d="M3.500 12v7" stroke="#9de09b" />
        <circle cx="12" cy="4" r="3.700" fill="#4ea4e0" />
        <path d="M7 9.500C7 7.500 18 7.500 18 9.500V14l-2 1.500-.5 6.500h-5L10 15z" fill="#2478ba" />
        <path d="M12.500 11v10" stroke="#a9dbff" />
      </svg>
    ),
  },
  {
    name: "XAMPP",
    running: true,
    icon: (
      <svg viewBox="0 0 24 24" className="size-6">
        <rect width="24" height="24" rx="2" fill="#f0741f" />
        <path d="M1 1h22v4H1z" fill="#f9a25e" />
        <path
          d="M5 7.500c4-2.500 6.500.500 4.500 4.500 2 4-.500 7-3 5.500-2.500-1-2-4 0-5.500M19 7.500c-4-2.500-6.500.500-4.500 4.500-2 4 .500 7 3 5.500 2.500-1 2-4 0-5.500M9.500 12h5M5 7.500 7 9.500M19 7.500 17 9.500"
          fill="none"
          stroke="#fff"
          strokeWidth="2.400"
          strokeLinecap="round"
          strokeLinejoin="round"
        />
      </svg>
    ),
  },
];

function TaskButton({ item }: { item: TaskItem }) {
  return (
    <button
      aria-label={item.name}
      className={`relative flex w-12 items-center justify-center ${item.active ? "bg-[#4a545e]" : ""}`}
    >
      {item.icon}
      {item.running && (
        <span className={`absolute bottom-0 h-0.5 bg-[#5590c0] ${item.active ? "inset-x-0" : "inset-x-1"}`} />
      )}
    </button>
  );
}

function Taskbar() {
  return (
    <footer className="flex h-10 items-stretch bg-[#1a242e] text-white">
      <div className="flex">
        {systemItems.map((item) => (
          <TaskButton key={item.name} item={item} />
        ))}
      </div>
      <div className="ml-[3px] flex gap-px">
        {appItems.map((item) => (
          <TaskButton key={item.name} item={item} />
        ))}
      </div>
      <div className="ml-auto flex items-center">
        <svg viewBox="0 0 20 18" className="h-[18px] w-5">
          <circle cx="10" cy="9" r="9" fill="#ffc227" />
          <path d="M3 17a3 3 0 0 1-1-6c1-1 3-1 4 0 2-4 7-4 8 0 5-1 7 4 4 6z" fill="#ecd9bf" />
          <path d="M3 14h14M6 11h7" stroke="#c2a482" strokeWidth=".8" />
        </svg>
        <p className="ml-2.5 flex gap-2.5 text-[13px]">
          <span>31°C</span>
          <span>Kabut</span>
        </p>
        <button aria-label="Show hidden icons" className="ml-4">
          <svg viewBox="0 0 12 7" className="h-[7px] w-3" fill="none" stroke="#fff" strokeWidth="1.200">
            <path d="m.5 6.500 5.500-5.500 5.500 5.500" />
          </svg>
        </button>
        <EdgeIcon className="ml-2.5 size-4" />
        <svg viewBox="0 0 14 14" className="ml-[11px] size-3.5" fill="none" stroke="#fff">
          <path d="M1 13A12 12 0 0 1 13 1.500" stroke="#8b9299" />
          <path d="M4 13a9 9 0 0 1 9-8.500M7 13a6 6 0 0 1 6-5.500" />
          <circle cx="11" cy="12" r="1.500" fill="#fff" stroke="none" />
        </svg>
        <svg viewBox="0 0 16 14" className="ml-2 h-3.5 w-4" fill="none" stroke="#fff">
          <path d="M.5 4.500h2L6 1.500v11L2.500 9.500h-2zM8 5c1 1 1 3 0 4" />
          <path d="M10.500 3c2 2 2 6 0 8M13 1c3 3 3 9 0 12" stroke="#8b9299" />
        </svg>
        <div className="ml-2.5 text-center text-[11px] leading-[18px]">
          <div>9:37</div>
          <div>06/10/2021</div>
        </div>
        <button aria-label="Notifications" className="mr-5 ml-[18px]">
          <svg viewBox="0 0 16 16" className="size-4">
            <path d="M0 0h16v13h-5l-3 3-3-3H0z" fill="#fff" />
            <path d="M3 3.500h10M3 6.500h10M3 9.500h6" stroke="#1a242e" />
          </svg>
        </button>
        <span className="mr-1 h-full w-px bg-[#5b646c]" />
      </div>
    </footer>
  );
}

export default function App() {
  return (
    <div className="flex min-h-screen flex-col font-['Open_Sans','Noto_Sans',sans-serif]">
      <TabStrip />
      <Toolbar />
      <AdminPage />
      <Taskbar />
    </div>
  );
}
